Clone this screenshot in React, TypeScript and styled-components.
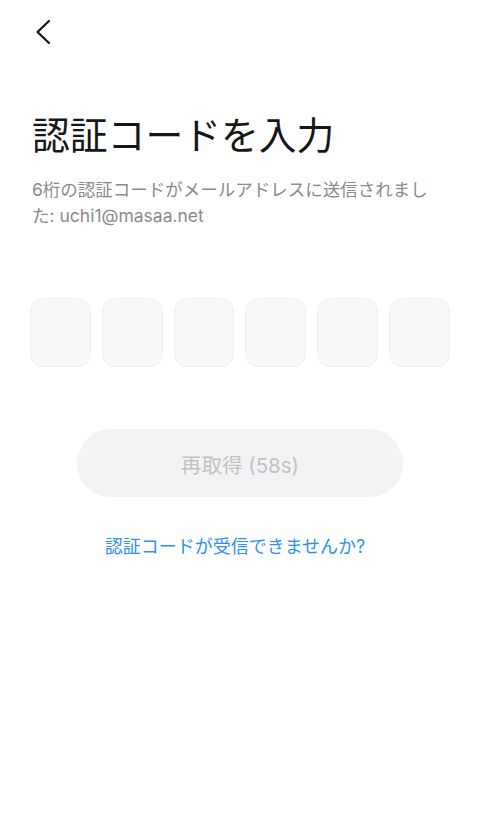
import React from "react";
import styled, { createGlobalStyle } from "styled-components";

const GlobalStyle = createGlobalStyle`
  html, body {
    margin: 0;
    padding: 0;
    background: #ffffff;
  }
  body {
    font-family: Inter, "Noto Sans CJK JP", sans-serif;
    -webkit-font-smoothing: antialiased;
  }
`;

const Screen = styled.div`
  width: 480px;
  min-height: 833px;
  display: flex;
  flex-direction: column;
  background: #ffffff;
  box-sizing: border-box;
`;

const Header = styled.header`
  height: 64px;
  display: flex;
  align-items: center;
  padding-left: 34px;
`;

const BackButton = styled.button`
  border: none;
  background: transparent;
  padding: 0;
  width: 18px;
  height: 26px;
  display: flex;
  align-items: center;
  justify-content: center;
  cursor: pointer;
  color: #111111;
`;

const Content = styled.main`
  display: flex;
  flex-direction: column;
  padding: 0 30px;
`;

const Title = styled.h1`
  margin: 49px 0 0 2px;
  font-size: 37.8px;
  line-height: 44px;
  font-weight: 400;
  color: #161616;
  letter-spacing: 0;
`;

const Subtitle = styled.p`
  margin: 20px 0 0 2px;
  font-size: 17.5px;
  line-height: 26px;
  color: #8a8a8a;
  font-weight: 400;
`;

const CodeRow = styled.div`
  margin-top: 69px;
  display: flex;
  gap: 11px;
`;

const CodeCell = styled.div`
  flex: 1;
  height: 69px;
  box-sizing: border-box;
  border: 1px solid #eceef1;
  border-radius: 13px;
  background: #f7f8fa;
`;

const ResendButton = styled.button`
  align-self: center;
  margin-top: 62px;
  width: 326px;
  height: 68px;
  border: none;
  border-radius: 34px;
  background: #f2f3f5;
  color: #c2c2c2;
  font-family: Inter, "Noto Sans CJK JP", sans-serif;
  font-size: 20.5px;
  padding-top: 2px;
  cursor: default;
`;

const HelpLink = styled.a`
  align-self: center;
  margin-top: 38px;
  margin-right: 10px;
  font-size: 18px;
  line-height: 24px;
  color: #2e8ff0;
  text-decoration: none;
`;

export default function App() {
  return (
    <>
      <GlobalStyle />
      <Screen>
        <Header>
          <BackButton aria-label="戻る">
            <svg width="16" height="26" viewBox="0 0 16 26" fill="none">
              <path
                d="M14 2 L2.5 13 L14 24"
                stroke="currentColor"
                strokeWidth="2.2"
                strokeLinecap="round"
                strokeLinejoin="round"
              />
            </svg>
          </BackButton>
        </Header>
        <Content>
          <Title>認証コードを入力</Title>
          <Subtitle>
            6桁の認証コードがメールアドレスに送信されました: uchi1@masaa.net
          </Subtitle>
          <CodeRow>
            {Array.from({ length: 6 }).map((_, i) => (
              <CodeCell key={i} />
            ))}
          </CodeRow>
          <ResendButton disabled>再取得 (58s)</ResendButton>
          <HelpLink href="#">認証コードが受信できませんか?</HelpLink>
        </Content>
      </Screen>
    </>
  );
}
